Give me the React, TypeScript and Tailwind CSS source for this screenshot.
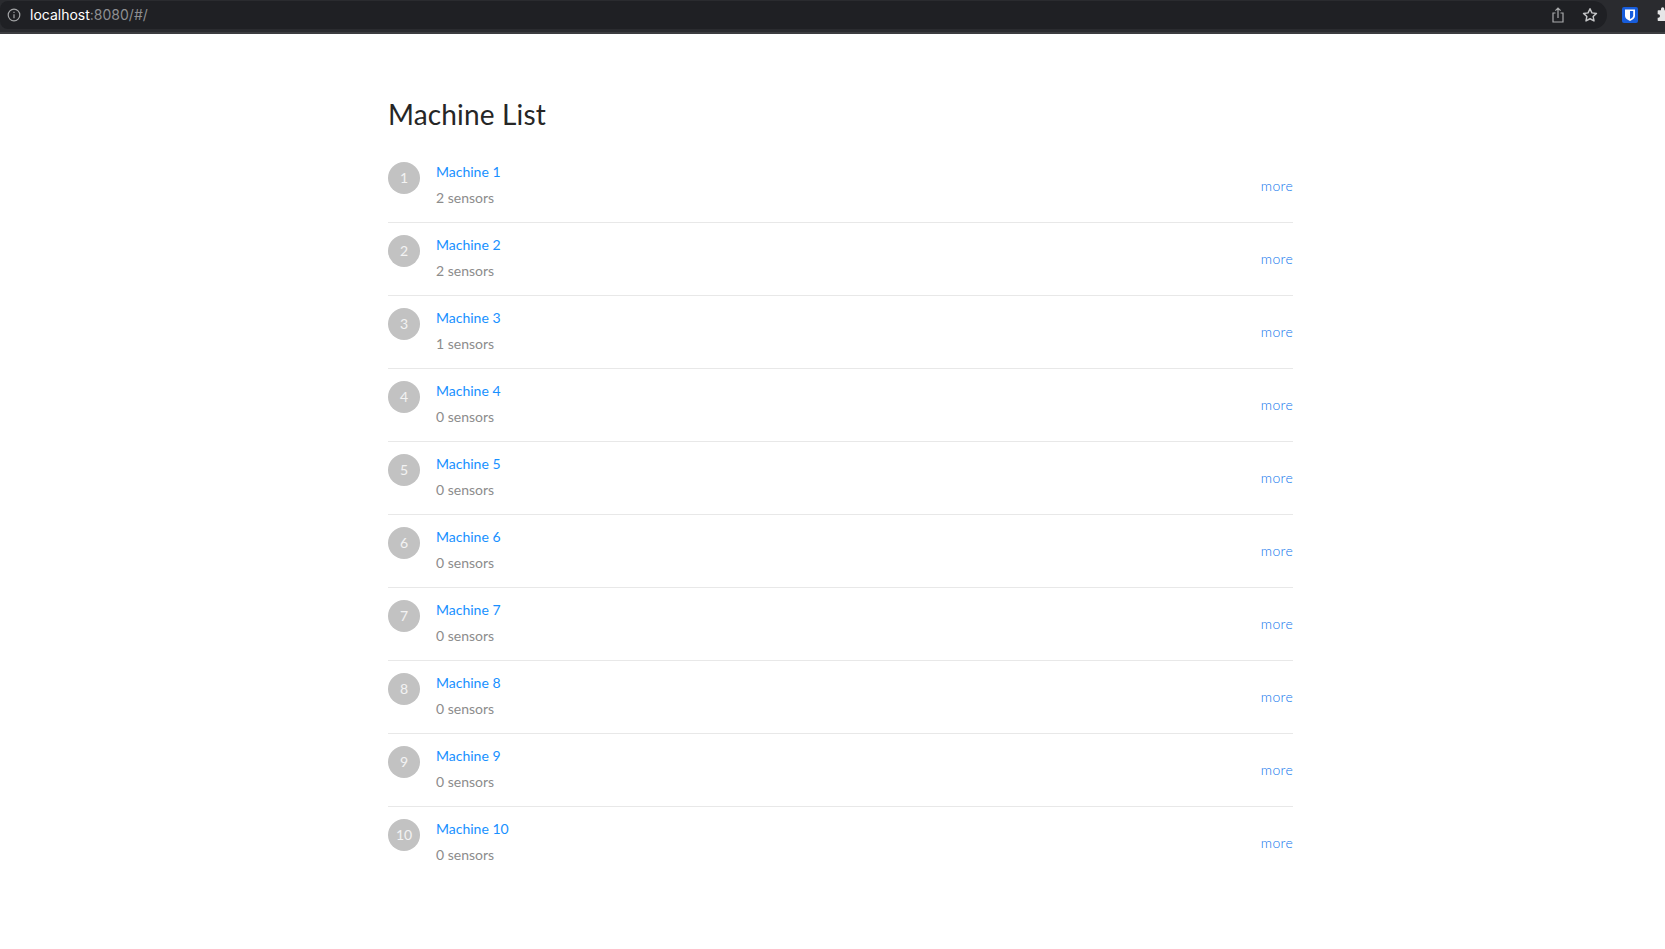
import React from "react";

const machines = [
  [1, 2], [2, 2], [3, 1], [4, 0], [5, 0], [6, 0], [7, 0], [8, 0], [9, 0], [10, 0],
];

export default function App() {
  return (
    <div className="min-h-[949px] bg-white font-['Lato','Liberation_Sans',sans-serif]">
      <div className="flex h-[34px] items-start bg-[#2a2b2f] border-b-[2px] border-[#3c3d40]">
        <div className="mt-[1px] flex h-[28px] w-[1607px] items-center rounded-r-[14px] rounded-l-[8px] bg-[#1f2024] pl-[7px] pr-[9px]">
          <svg width="14" height="14" viewBox="0 0 14 14" fill="none" stroke="#a3a4a6" strokeWidth="1.2">
            <circle cx="7" cy="7" r="5.8" />
            <path d="M7 6.2v4M7 3.8v1.2" />
          </svg>
          <span className="ml-[9px] text-[14px] leading-none font-['Inter','Liberation_Sans',sans-serif]">
            <span className="text-white">localhost</span>
            <span className="text-[#8e8f92]">:8080/#/</span>
          </span>
          <div className="ml-auto flex items-center gap-[17px]">
            <svg width="14" height="16" viewBox="0 0 14 16" fill="none" stroke="#a9aaac" strokeWidth="1.2">
              <path d="M4.5 6H2v9h10V6H9.5M7 11V1.2M4.4 3.6 7 1l2.6 2.6" />
            </svg>
            <svg width="16" height="16" viewBox="0 0 24 24" fill="none" stroke="#c4c5c7" strokeWidth="2.2" strokeLinejoin="round">
              <path d="m12 2.6 2.9 6.2 6.8.8-5 4.6 1.3 6.7-6-3.3-6 3.3 1.3-6.7-5-4.6 6.8-.8z" />
            </svg>
          </div>
        </div>
        <div className="flex h-[30px] flex-1 items-center gap-[17px] overflow-hidden pl-[15px]">
          <svg width="16" height="16" viewBox="0 0 16 16" className="shrink-0">
            <rect width="16" height="16" rx="2" fill="#175ddc" />
            <path d="M3 2.5h10v6c0 2.8-2.6 4.4-5 5.5-2.4-1.1-5-2.7-5-5.5z" fill="#fff" />
            <path d="M8 4v8c1.5-.8 3.2-1.9 3.2-3.6V4z" fill="#175ddc" />
          </svg>
          <svg width="16" height="16" viewBox="0 0 24 24" fill="#e6e6e7" className="shrink-0">
            <path d="M9 3a2.5 2.5 0 0 1 5 0v2h5a1 1 0 0 1 1 1v4h-2a2.5 2.5 0 0 0 0 5h2v5a1 1 0 0 1-1 1H5a1 1 0 0 1-1-1v-4h1a2.5 2.5 0 0 0 0-5H4V6a1 1 0 0 1 1-1h4z" />
          </svg>
        </div>
      </div>

      <main className="ml-[388px] w-[905px] pt-[62px]">
        <h1 className="mb-[18px] text-[28px] leading-[36px] font-normal tracking-[0.15px] text-[#262626]">Machine List</h1>
        <ul>
          {machines.map(([id, sensors], i) => (
            <li
              key={id}
              className={`flex items-center py-[12px] ${i < machines.length - 1 ? "border-b border-[#e8e8e8]" : ""}`}
            >
              <div className="flex flex-1 items-start">
                <div className="mr-[16px] flex h-[32px] w-[32px] items-center justify-center rounded-full bg-[#c2c2c2] pb-[2px] text-[14px] text-white/80">
                  {id}
                </div>
                <div className="-mt-[1px] pb-[1px] text-[14px] leading-[22px]">
                  <a className="mb-[4px] block text-[#1890ff]">Machine {id}</a>
                  <div className="text-[#8c8c8c]">{sensors} sensors</div>
                </div>
              </div>
              <a className="text-[14px] leading-[22px] font-light tracking-[0.3px] text-[#0a74ec]">more</a>
            </li>
          ))}
        </ul>
      </main>
    </div>
  );
}
